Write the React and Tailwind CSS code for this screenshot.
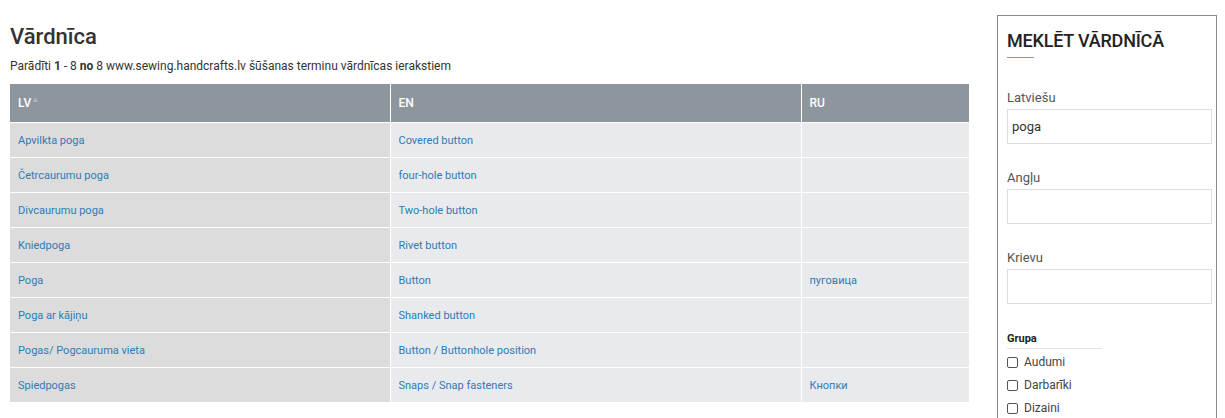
import React from 'react';

const rows = [
  { lv: 'Apvilkta poga', en: 'Covered button', ru: '' },
  { lv: 'Četrcaurumu poga', en: 'four-hole button', ru: '' },
  { lv: 'Divcaurumu poga', en: 'Two-hole button', ru: '' },
  { lv: 'Kniedpoga', en: 'Rivet button', ru: '' },
  { lv: 'Poga', en: 'Button', ru: 'пуговица' },
  { lv: 'Poga ar kājiņu', en: 'Shanked button', ru: '' },
  { lv: 'Pogas/ Pogcauruma vieta', en: 'Button / Buttonhole position', ru: '' },
  { lv: 'Spiedpogas', en: 'Snaps / Snap fasteners', ru: 'Кнопки' },
];

const groups = ['Audumi', 'Darbarīki', 'Dizaini'];

const linkStyle = 'text-[11px] text-[#2f7bb5] hover:underline';
const inputStyle = 'mt-[3px] w-[205px] h-[35px] border border-[#ddd] px-[4px] text-[13px] text-[#333] outline-none';

const App = () => {
  return (
    <div className="flex w-[1225px] h-[418px] overflow-hidden bg-white font-['Roboto',sans-serif] text-[#333]">
      <div className="w-[959px] ml-[10px] pt-[24px]">
        <h1 className="text-[22px] leading-[26px] font-medium text-[#333]">Vārdnīca</h1>
        <p className="mt-[8px] text-[12px] leading-[16px] text-[#333]">
          Parādīti <b>1</b> - 8 <b>no</b> 8 www.sewing.handcrafts.lv šūšanas terminu vārdnīcas ierakstiem
        </p>
        <table className="mt-[10px] w-[959px] border-collapse table-fixed">
          <colgroup>
            <col className="w-[380px]" />
            <col className="w-[411px]" />
            <col className="w-[168px]" />
          </colgroup>
          <thead>
            <tr className="bg-[#8e969d] h-[38px]">
              <th className="text-left px-[8px] text-[12px] font-medium text-white border-r border-white">
                LV<span className="text-[8px] text-[#b0b5ba] align-top">▲</span>
              </th>
              <th className="text-left px-[8px] text-[12px] font-medium text-white border-r border-white">EN</th>
              <th className="text-left px-[8px] text-[12px] font-medium text-white">RU</th>
            </tr>
          </thead>
          <tbody>
            {rows.map((r) => (
              <tr key={r.lv} className="h-[35px] border-t border-white">
                <td className="bg-[#dcdcdc] px-[8px] pb-[1px] border-r border-white">
                  <a href="#" className={linkStyle}>{r.lv}</a>
                </td>
                <td className="bg-[#e8eaed] px-[8px] pb-[1px] border-r border-white">
                  <a href="#" className={linkStyle}>{r.en}</a>
                </td>
                <td className="bg-[#e8eaed] px-[8px] pb-[1px]">
                  {r.ru && <a href="#" className={linkStyle}>{r.ru}</a>}
                </td>
              </tr>
            ))}
          </tbody>
        </table>
      </div>

      <div className="ml-[28px] mt-[15px] w-[220px] h-[420px] border border-[#8a8a8a] px-[9px] pt-[15px]">
        <h2 className="text-[18px] leading-[20px] font-medium text-[#222] tracking-[-0.2px]">MEKLĒT VĀRDNĪCĀ</h2>
        <div className="mt-[6px] w-[27px] h-[1px] bg-[#5aa9de]" />

        <label className="block mt-[32px] text-[13px] leading-[16px] text-[#555]">Latviešu</label>
        <input type="text" defaultValue="poga" className={inputStyle} />

        <label className="block mt-[26px] text-[13px] leading-[16px] text-[#555]">Angļu</label>
        <input type="text" className={inputStyle} />

        <label className="block mt-[26px] text-[13px] leading-[16px] text-[#555]">Krievu</label>
        <input type="text" className={inputStyle} />

        <div className="mt-[28px] w-[95px] border-b border-[#e2e2e2] pb-[2px] text-[11px] leading-[14px] font-bold text-[#222]">Grupa</div>
        <div className="mt-[5px] flex flex-col gap-[7px]">
          {groups.map((g) => (
            <label key={g} className="flex items-center gap-[6px] text-[12px] leading-[16px] text-[#444]">
              <span className="w-[11px] h-[11px] border border-[#555] rounded-[2px] bg-white" />
              {g}
            </label>
          ))}
        </div>
      </div>
    </div>
  );
};

export default App;
